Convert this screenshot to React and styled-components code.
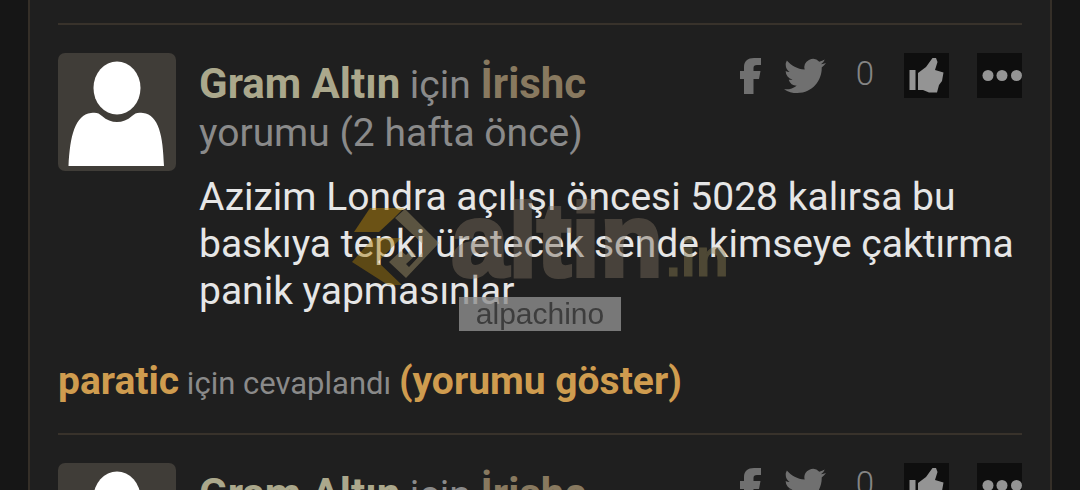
import React from 'react';
import styled, { createGlobalStyle } from 'styled-components';


const GlobalStyle = createGlobalStyle`
    html {
        scrollbar-width: none;
    }

    body {
        margin: 0;
        background-color: #161616;
        font-family: Roboto, "Liberation Sans", sans-serif;
        overflow-x: hidden;
    }

    * {
        box-sizing: border-box;
    }
`;

const PageDiv = styled.div`
    height: 100vh;
    overflow: hidden;
    padding: 0 28px;
`;

const PanelMain = styled.main`
    padding: 23px 28px 0;
    background-color: #1f1f1f;
    border: solid #352f28;
    border-width: 0 2px;
`;

const CommentArticle = styled.article`
    padding: 28px 0 25px;
    border-top: 2px solid #38322b;
`;

const RowDiv = styled.div`
    display: flex;
    align-items: flex-start;
    gap: 23px;
`;

const AvatarSvg = styled.svg`
    flex: none;
    width: 118px;
    height: 118px;
    border-radius: 7px;
    background-color: #403d38;
`;

const ContentDiv = styled.div`
    flex: 1;
    min-width: 0;
`;

const HeaderDiv = styled.header`
    display: flex;
    align-items: flex-start;
    justify-content: space-between;
`;

const TitleDiv = styled.div`
    max-width: 460px;
    padding-top: 8px;
    font-size: 39px;
    line-height: 48px;
    color: #8a8a8a;
`;

const NameLink = styled.a`
    font-size: 42px;
    font-weight: 700;
    line-height: 1;
    text-decoration: none;
    color: ${props => props.$color};
`;

const ActionsDiv = styled.div`
    display: flex;
    align-items: center;
    gap: 28px;
`;

const ShareDiv = styled.div`
    display: flex;
    align-items: center;
    gap: 20px;
`;

const ShareButton = styled.button`
    display: flex;
    padding: 0;
    border: 0;
    background: none;
    color: #707070;
    cursor: pointer;
`;

const SquareButton = styled(ShareButton)`
    width: 45px;
    height: 45px;
    background-color: #0e0e0e;
    color: #949494;
`;

const CountSpan = styled.span`
    width: 22px;
    padding-bottom: 4px;
    text-align: center;
    font-size: 33px;
    font-weight: 300;
    line-height: 40px;
    color: #858585;
`;

const TextP = styled.p`
    margin: 17px 0 0;
    font-size: 39px;
    line-height: 47px;
    color: #e6e6e6;
`;

const ReplyP = styled.p`
    margin: 42px 0 0;
    font-size: 31px;
    line-height: 48px;
    color: #8a8a8a;
`;

const ReplyLink = styled(NameLink)`
    font-size: 39px;
    line-height: 48px;
`;

const WatermarkDiv = styled.div`
    position: fixed;
    inset: 0;
    display: flex;
    flex-direction: column;
    align-items: center;
    padding-top: 199px;
    pointer-events: none;
`;

const BrandDiv = styled.div`
    display: flex;
    align-items: flex-start;
    height: 98px;
    gap: 10px;
    opacity: 0.45;
`;

const BrandSvg = styled.svg`
    width: 90px;
    height: 88px;
    margin-top: 7px;
`;

const BrandSpan = styled.span`
    font-family: "Liberation Sans", Arial, sans-serif;
    font-size: 103px;
    font-weight: 700;
    line-height: 84px;
    color: #7b6e5e;
    -webkit-text-stroke: 4px #7b6e5e;

    small {
        margin-left: 3px;
        font-size: 54px;
        line-height: 1;
        color: #887b50;
        -webkit-text-stroke: 1px #887b50;
    }
`;

const UserSpan = styled.span`
    padding: 0 17px;
    background-color: rgba(142, 142, 142, 0.8);
    font-family: "Liberation Sans", Arial, sans-serif;
    font-size: 30px;
    line-height: 34px;
    color: #3d3d3d;
`;


const Avatar = () => (
    <AvatarSvg viewBox="0 0 118 118" aria-hidden="true">
        <ellipse cx="59" cy="35" rx="23.5" ry="26.5" fill="#fff" />
        <path d="M10.500 113 C12 83 17 62 33 60 C38 59 41 60 44 63 C53 71 65 71 74 63 C77 60 80 59 85 60 C101 62 105 83 106 113 Z" fill="#fff" />
    </AvatarSvg>
);

const FacebookIcon = () => (
    <svg width="26" height="40" viewBox="0 0 26 40" aria-hidden="true">
        <path d="M6 38 V23 H2 V15 H6 V11 C6 5 10 2 16 2 H23 V9 H19 C16.500 9 15.500 10 15.500 12 V15 H22.500 L21 23 H15.500 V38 Z" fill="currentColor" />
    </svg>
);

const TwitterIcon = () => (
    <svg width="42" height="42" viewBox="0 0 24 24" aria-hidden="true">
        <path d="M23.950 4.570a10 10 0 0 1-2.820.770 4.960 4.960 0 0 0 2.160-2.720c-.95.550-2 .95-3.120 1.180a4.920 4.920 0 0 0-8.380 4.480C7.690 8.090 4.070 6.130 1.640 3.160a4.820 4.820 0 0 0-.67 2.480c0 1.710.87 3.210 2.190 4.100a4.900 4.900 0 0 1-2.230-.62v.06a4.920 4.920 0 0 0 3.950 4.830 5 5 0 0 1-2.210.080 4.940 4.940 0 0 0 4.600 3.420A9.870 9.870 0 0 1 0 19.540a13.990 13.990 0 0 0 7.550 2.210c9.050 0 14-7.500 14-13.980 0-.21 0-.42-.02-.63a9.940 9.940 0 0 0 2.460-2.550z" fill="currentColor" />
    </svg>
);

const LikeIcon = () => (
    <svg width="45" height="45" viewBox="0 0 45 45" fill="currentColor" aria-hidden="true">
        <path d="M5.500 17 H11.500 V37 H5.500 Z" />
        <path d="M14 20 L22 14 L28.500 5 L32 5 L33.500 9 L31 17 L39.500 19.500 L38 28 L35 32 L33 39.500 L25 39.500 L19 37 L14 37 Z" />
    </svg>
);

const DotsIcon = () => (
    <svg width="45" height="45" viewBox="0 0 45 45" fill="currentColor" aria-hidden="true">
        <circle cx="11" cy="22.500" r="5.500" />
        <circle cx="25" cy="22.500" r="5.500" />
        <circle cx="39.500" cy="22.500" r="5.500" />
    </svg>
);


const Comment = ({ asset, author, when, text, replyTo }) => (
    <CommentArticle>
        <RowDiv>
            <Avatar />
            <ContentDiv>
                <HeaderDiv>
                    <TitleDiv>
                        <NameLink href="#asset" $color="#aba88c">{asset}</NameLink> için{' '}
                        <NameLink href="#author" $color="#88795f">{author}</NameLink> yorumu ({when})
                    </TitleDiv>
                    <ActionsDiv>
                        <ShareDiv>
                            <ShareButton aria-label="Facebook"><FacebookIcon /></ShareButton>
                            <ShareButton aria-label="Twitter"><TwitterIcon /></ShareButton>
                        </ShareDiv>
                        <CountSpan>0</CountSpan>
                        <SquareButton aria-label="Beğen"><LikeIcon /></SquareButton>
                        <SquareButton aria-label="Diğer"><DotsIcon /></SquareButton>
                    </ActionsDiv>
                </HeaderDiv>
                <TextP>{text}</TextP>
            </ContentDiv>
        </RowDiv>
        <ReplyP>
            <ReplyLink href="#user" $color="#cf9c4f">{replyTo}</ReplyLink> için cevaplandı{' '}
            <ReplyLink href="#comment" $color="#cf9c4f">(yorumu göster)</ReplyLink>
        </ReplyP>
    </CommentArticle>
);

const Watermark = () => (
    <WatermarkDiv>
        <BrandDiv>
            <BrandSvg viewBox="0 0 90 88" aria-hidden="true">
                <path d="M19 2 H53 L42 13 L28 26 H3 Z" fill="#c8900a" />
                <path d="M22 32 H50 L27 56 L51 79 H37 L1 56 Z" fill="#a97c0a" />
                <path d="M44 12 L54 3 L88 37 L55 72 L38 56 L50 45 L55 49 L60 44 L65 49 L55 58 L58 61 L72 46 L72 38 Z" fill="#a5956b" />
            </BrandSvg>
            <BrandSpan>altin<small>.in</small></BrandSpan>
        </BrandDiv>
        <UserSpan>alpachino</UserSpan>
    </WatermarkDiv>
);


const comments = [
    {
        id: 1,
        asset: 'Gram Altın',
        author: 'İrishc',
        when: '2 hafta önce',
        text: 'Azizim Londra açılışı öncesi 5028 kalırsa bu baskıya tepki üretecek sende kimseye çaktırma panik yapmasınlar',
        replyTo: 'paratic'
    },
    {
        id: 2,
        asset: 'Gram Altın',
        author: 'İrishc',
        when: '2 hafta önce',
        text: '',
        replyTo: 'paratic'
    }
];

const App = () => (
    <PageDiv>
        <GlobalStyle />
        <PanelMain>
            {comments.map(({ id, ...comment }) => <Comment key={id} {...comment} />)}
        </PanelMain>
        <Watermark />
    </PageDiv>
);

export default App;
